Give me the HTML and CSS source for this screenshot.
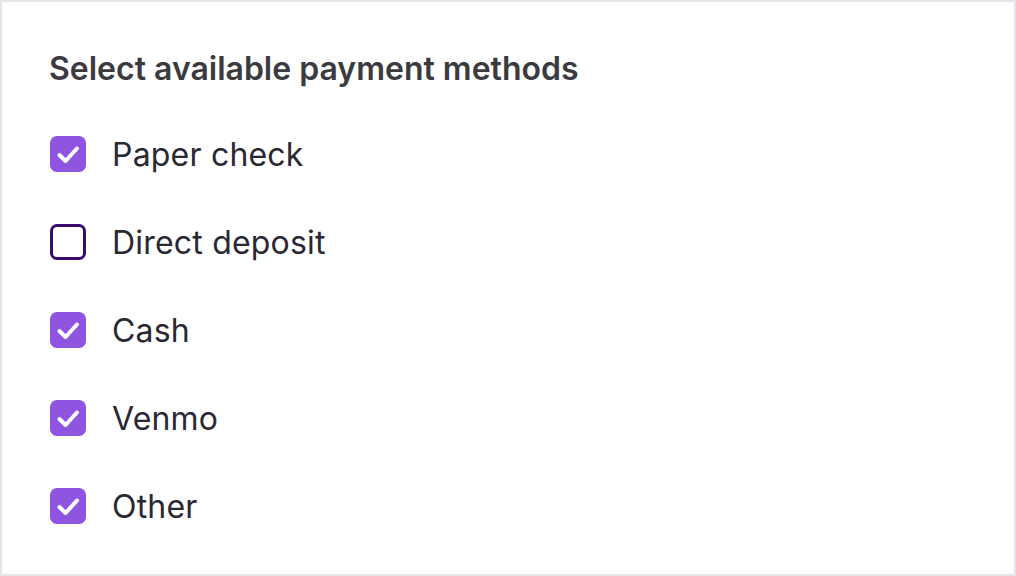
FILE: index.html
```html
<!DOCTYPE html>
<html lang="en">
<head>
  <meta charset="UTF-8" />
  <meta name="viewport" content="width=device-width, initial-scale=1.0"/>
  <title>Payment methods</title>
  <link rel="stylesheet" href="styles.css">
</head>
<body>

  <div class="panel">
    <h1>Select available payment methods</h1>

    <div class="options">
      <label class="option">
        <span class="box checked">
          <svg viewBox="0 0 36 36"><path d="M9.5 19 L15.5 25 L27 12.5" /></svg>
        </span>
        Paper check
      </label>

      <label class="option">
        <span class="box"></span>
        Direct deposit
      </label>

      <label class="option">
        <span class="box checked">
          <svg viewBox="0 0 36 36"><path d="M9.5 19 L15.5 25 L27 12.5" /></svg>
        </span>
        Cash
      </label>

      <label class="option">
        <span class="box checked">
          <svg viewBox="0 0 36 36"><path d="M9.5 19 L15.5 25 L27 12.5" /></svg>
        </span>
        Venmo
      </label>

      <label class="option">
        <span class="box checked">
          <svg viewBox="0 0 36 36"><path d="M9.5 19 L15.5 25 L27 12.5" /></svg>
        </span>
        Other
      </label>
    </div>
  </div>

</body>
</html>
```

FILE: styles.css
```css
html, body {
  margin: 0;
  padding: 0;
}

body {
  font-family: Inter, "Noto Sans", sans-serif;
  background-color: #ffffff;
}

.panel {
  box-sizing: border-box;
  width: 1016px;
  height: 576px;
  border: 2px solid #e4e4e8;
  padding: 47px 47px;
}

h1 {
  margin: 0 0 47px 0;
  font-size: 32px;
  font-weight: 600;
  color: #3a3a3f;
  line-height: 40px;
}

.options {
  display: flex;
  flex-direction: column;
  gap: 52px;
  padding-left: 1px;
}

.option {
  display: flex;
  align-items: center;
  gap: 26px;
  height: 36px;
  font-size: 32px;
  letter-spacing: 0.2px;
  color: #2a2833;
  cursor: pointer;
}

.box {
  box-sizing: border-box;
  width: 36px;
  height: 36px;
  border-radius: 7px;
  border: 3px solid #3b0a6e;
  display: flex;
  flex-shrink: 0;
}

.box.checked {
  background-color: #8f55e0;
  border: none;
}

.box svg {
  width: 36px;
  height: 36px;
}

.box svg path {
  fill: none;
  stroke: #ffffff;
  stroke-width: 4;
  stroke-linecap: round;
  stroke-linejoin: round;
}
```
